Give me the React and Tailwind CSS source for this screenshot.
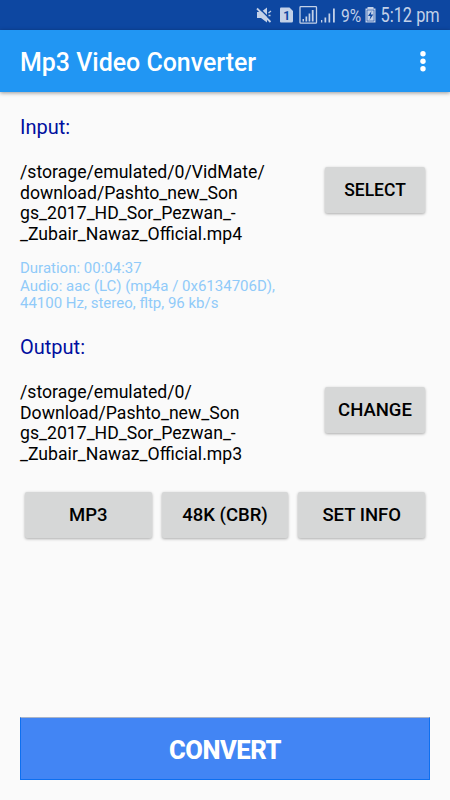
import React from 'react';

const inputPath = [
  '/storage/emulated/0/VidMate/',
  'download/Pashto_new_Son',
  'gs_2017_HD_Sor_Pezwan_-',
  '_Zubair_Nawaz_Official.mp4',
];

const outputPath = [
  '/storage/emulated/0/',
  'Download/Pashto_new_Son',
  'gs_2017_HD_Sor_Pezwan_-',
  '_Zubair_Nawaz_Official.mp3',
];

const mediaInfo = [
  'Duration: 00:04:37',
  'Audio: aac (LC) (mp4a / 0x6134706D),',
  '44100 Hz, stereo, fltp, 96 kb/s',
];

const options = ['MP3', '48K (CBR)', 'SET INFO'];

function StatusBar() {
  return (
    <div className="h-[30px] bg-[#0d47a1] text-[#c3d1e8]">
      <svg className="block h-[30px] w-full" viewBox="0 0 450 30" fill="currentColor">
        {/* muted speaker */}
        <path d="M257 12h4l6-4.500v15l-6-4.500h-4z" />
        <path d="M258 7L272 21" stroke="#0d47a1" strokeWidth="1.500" />
        <path d="M257 8.500L270.500 22" stroke="currentColor" strokeWidth="1.800" />
        <path d="M268.500 13l2.500-2M268.500 15.500h2" stroke="currentColor" strokeWidth="1.300" />
        {/* sim card */}
        <path d="M281 7.500h8.500l3.500 3.500v10q0 1.500-1.500 1.500H281q-1 0-1-1v-13q0-1 1-1z" />
        <text x="283.200" y="19.500" fontFamily="Roboto" fontSize="12" fontWeight="700" fill="#0d47a1">1</text>
        {/* signal of both sims */}
        <rect x="300" y="6.700" width="16.500" height="16.500" rx="0.800" fill="none" stroke="currentColor" strokeWidth="1.300" />
        <path d="M302.500 19h1.500v2.500h-1.500zM305.500 16.500h1.700v5h-1.700zM308.600 13.500h1.700v8h-1.700zM311.800 10h1.800v11.500h-1.800z" />
        <path d="M321 20h1.300v2.500H321zM324.500 17.500h1.700v5h-1.700zM328.500 13.500h1.700v9h-1.700zM333 8.500h1.800v14H333z" />
        <text transform="translate(341 22) scale(0.82 1)" fontFamily="Roboto" fontSize="19">9%</text>
        {/* charging battery */}
        <path d="M367.500 7h6v1.500h2v14h-10v-14h2z" />
        <path d="M367 10h7v11h-7z" fill="none" stroke="#0d47a1" strokeWidth="0.600" />
        <path d="M371.500 11l-3.500 5h2.500l-1 4 3.800-5.500h-2.500z" fill="#0d47a1" />
        <text transform="translate(380.500 22) scale(0.84 1)" fontFamily="Roboto" fontSize="19.500">5:12 pm</text>
      </svg>
    </div>
  );
}

function Lines({ lines, className }) {
  return (
    <div className={className}>
      {lines.map((line) => (
        <div key={line} className="whitespace-nowrap">{line}</div>
      ))}
    </div>
  );
}

function GreyButton({ children, className }) {
  return (
    <button
      className={`h-[46px] rounded-[2px] bg-[#d6d7d7] pt-px font-medium text-black shadow-[0_1px_3px_rgba(0,0,0,0.32)] ${className}`}
    >
      {children}
    </button>
  );
}

function App() {
  return (
    <div className="flex h-[800px] w-[450px] flex-col overflow-hidden bg-[#fafafa] font-['Roboto',sans-serif]">
      <StatusBar />
      <header className="flex h-[62px] items-center justify-between bg-[#2196f3] pl-5 pr-[24.5px] text-white shadow-[0_1px_4px_rgba(0,0,0,0.4)]">
        <h1 className="pt-[3px] text-[24.95px] font-medium leading-[30px]">Mp3 Video Converter</h1>
        <svg className="h-[22px] w-[6px]" viewBox="0 0 6 22" fill="currentColor">
          <circle cx="3" cy="3.700" r="2.700" />
          <circle cx="3" cy="11.200" r="2.700" />
          <circle cx="3" cy="18.800" r="2.700" />
        </svg>
      </header>

      <main className="flex flex-1 flex-col px-5 pb-5">
        <h2 className="mt-[23px] h-6 text-[20px] leading-6 text-[#000f9f]">Input:</h2>
        <div className="mt-[23px] flex h-[82px] items-start justify-between pr-[5px]">
          <Lines lines={inputPath} className="text-[17.65px] leading-[20.5px] text-black" />
          <GreyButton className="mt-[5px] w-[100px] text-[17.5px]">SELECT</GreyButton>
        </div>
        <Lines lines={mediaInfo} className="mt-[16px] h-[53px] text-[15px] leading-[17.6px] text-[#90caf9]" />

        <h2 className="mt-[22px] h-6 text-[20px] leading-6 text-[#000f9f]">Output:</h2>
        <div className="mt-[23px] flex h-[82px] items-start justify-between pr-[5px]">
          <Lines lines={outputPath} className="text-[17.65px] leading-[20.5px] text-black" />
          <GreyButton className="mt-[5px] w-[100px] text-[18.5px]">CHANGE</GreyButton>
        </div>

        <div className="mt-[28px] flex gap-[10px] px-[5px]">
          {options.map((option) => (
            <GreyButton key={option} className="flex-1 text-[18.5px]">{option}</GreyButton>
          ))}
        </div>

        <button className="mt-auto h-[63px] w-full border border-[#0d6ff0] border-t-[#a9b4c8] bg-[#4285f4] pt-[3px] text-[25.6px] font-extrabold tracking-[-0.5px] text-white">
          CONVERT
        </button>
      </main>
    </div>
  );
}

export default App;
